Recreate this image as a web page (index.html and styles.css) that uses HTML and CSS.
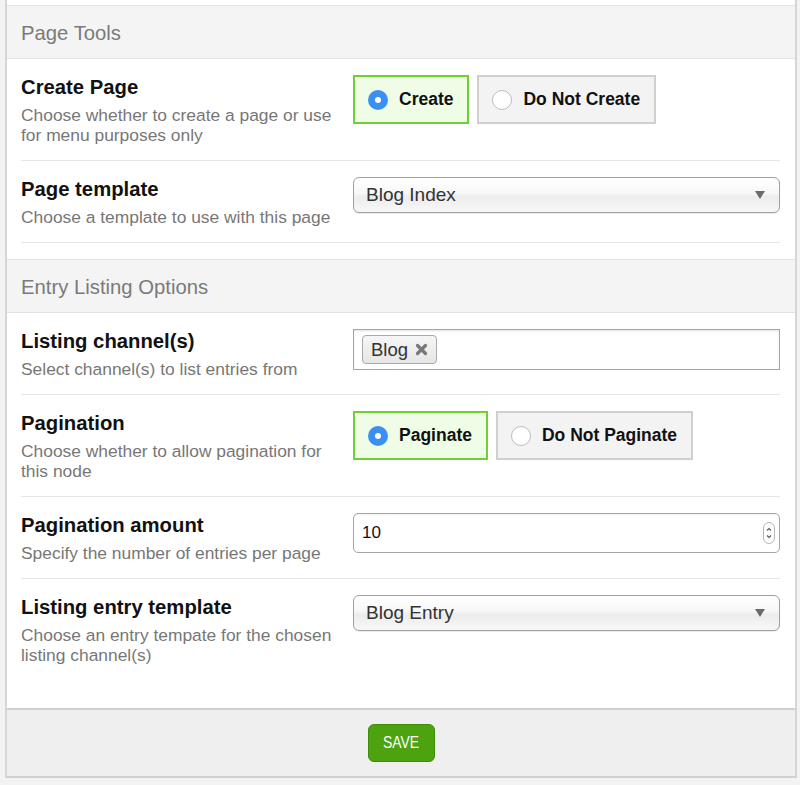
FILE: index.html
```html
<!DOCTYPE html>
<html>
<head>
<meta charset="utf-8">
<link rel="stylesheet" href="styles.css">
</head>
<body>
<div class="panel">
  <div class="topgap"></div>
  <section class="section">
    <div class="sec-head">Page Tools</div>
    <div class="row">
      <div class="info">
        <div class="label">Create Page</div>
        <div class="desc">Choose whether to create a page or use for menu purposes only</div>
      </div>
      <div class="ctrl">
        <div class="radios">
          <div class="radio on"><span class="dot"></span><span class="rtext">Create</span></div>
          <div class="radio"><span class="dot"></span><span class="rtext">Do Not Create</span></div>
        </div>
      </div>
    </div>
    <div class="row">
      <div class="info">
        <div class="label">Page template</div>
        <div class="desc">Choose a template to use with this page</div>
      </div>
      <div class="ctrl">
        <div class="select"><span>Blog Index</span><svg class="caret" width="10" height="8" viewBox="0 0 10 8"><path d="M0 0H10L5 8Z" fill="#6b6b6b"/></svg></div>
      </div>
    </div>
  </section>
  <section class="section last">
    <div class="sec-head">Entry Listing Options</div>
    <div class="row">
      <div class="info">
        <div class="label">Listing channel(s)</div>
        <div class="desc">Select channel(s) to list entries from</div>
      </div>
      <div class="ctrl">
        <div class="tags"><span class="tag">Blog<svg class="x" width="13" height="13" viewBox="0 0 13 13"><path d="M2.5 2.5L10.5 10.5M10.5 2.5L2.5 10.5" stroke="#777" stroke-width="3.2" stroke-linecap="round"/></svg></span></div>
      </div>
    </div>
    <div class="row">
      <div class="info">
        <div class="label">Pagination</div>
        <div class="desc">Choose whether to allow pagination for this node</div>
      </div>
      <div class="ctrl">
        <div class="radios">
          <div class="radio on"><span class="dot"></span><span class="rtext">Paginate</span></div>
          <div class="radio"><span class="dot"></span><span class="rtext">Do Not Paginate</span></div>
        </div>
      </div>
    </div>
    <div class="row">
      <div class="info">
        <div class="label">Pagination amount</div>
        <div class="desc">Specify the number of entries per page</div>
      </div>
      <div class="ctrl">
        <div class="number"><span>10</span><svg class="spin" width="12" height="22" viewBox="0 0 12 22"><rect x="0.5" y="0.5" width="11" height="21" rx="5.5" fill="#fff" stroke="#b5b5b5"/><path d="M4 8.5L6 6.5L8 8.5M4 13.5L6 15.5L8 13.5" fill="none" stroke="#555" stroke-width="1.1"/></svg></div>
      </div>
    </div>
    <div class="row noline">
      <div class="info">
        <div class="label">Listing entry template</div>
        <div class="desc">Choose an entry tempate for the chosen listing channel(s)</div>
      </div>
      <div class="ctrl">
        <div class="select"><span>Blog Entry</span><svg class="caret" width="10" height="8" viewBox="0 0 10 8"><path d="M0 0H10L5 8Z" fill="#6b6b6b"/></svg></div>
      </div>
    </div>
  </section>
  <div class="footer">
    <button class="save"><span class="save-text">SAVE</span></button>
  </div>
</div>
</body>
</html>
```
FILE: styles.css
```css
html, body {
  margin: 0;
  padding: 0;
  background: #f3f3f3;
}
body {
  padding: 0 3px 0 5px;
  font-family: "Liberation Sans", Arial, Helvetica, sans-serif;
  color: #111;
}
.panel {
  background: #fff;
  border-left: 2px solid #d6d6d6;
  border-right: 2px solid #d6d6d6;
  border-bottom: 2px solid #d0d0d0;
}
.topgap {
  height: 5px;
}
.section {
  padding-bottom: 16px;
}
.section.last {
  padding-bottom: 28px;
}
.sec-head {
  height: 52px;
  line-height: 54px;
  background: #f4f4f4;
  border-top: 1px solid #e2e2e2;
  border-bottom: 1px solid #e2e2e2;
  padding-left: 14px;
  font-size: 20.3px;
  color: #7a7a7a;
}
.row {
  display: grid;
  grid-template-columns: 332px 1fr;
  margin: 0 15px 0 14px;
  padding: 16px 0 15px;
  border-bottom: 1px solid #e6e6e6;
}
.row.noline {
  border-bottom: none;
}
.info {
  padding-right: 14px;
}
.label {
  font-size: 20.3px;
  font-weight: bold;
  line-height: 25px;
  color: #111;
}
.desc {
  margin-top: 5px;
  font-size: 17.4px;
  line-height: 20px;
  color: #777;
}
.radios {
  display: flex;
  gap: 8px;
}
.radio {
  display: flex;
  align-items: center;
  height: 45px;
  padding: 0 14px 0 13px;
  border: 2px solid #cfcfcf;
  background: #f3f3f3;
}
.radio.on {
  border-color: #6fd034;
  background: #effde6;
}
.dot {
  width: 20px;
  height: 20px;
  box-sizing: border-box;
  border-radius: 50%;
  border: 1px solid #bdbdbd;
  background: #fff;
  margin-right: 11px;
  position: relative;
}
.radio.on .dot {
  border: none;
  background: #3b8ff2;
}
.radio.on .dot::after {
  content: "";
  position: absolute;
  left: 7px;
  top: 7px;
  width: 6px;
  height: 6px;
  border-radius: 50%;
  background: #fff;
}
.rtext {
  font-size: 17.5px;
  font-weight: bold;
  color: #111;
}
.select {
  height: 34px;
  border: 1px solid #a0a0a0;
  border-radius: 6px;
  background: linear-gradient(#ffffff 0%, #f7f7f7 45%, #ececec 55%, #f8f8f8 100%);
  box-shadow: 0 1px 1px rgba(0,0,0,0.08);
  display: flex;
  align-items: center;
  justify-content: space-between;
  padding: 0 14px 0 12px;
  font-size: 19px;
  color: #333;
}
.tags {
  height: 39px;
  border: 1px solid #a6a6a6;
  box-shadow: inset 0 1px 2px rgba(0,0,0,0.12);
  display: flex;
  align-items: flex-start;
  padding: 0 8px;
}
.tag {
  margin-top: 5px;
  height: 27px;
  display: flex;
  align-items: center;
  gap: 7px;
  padding: 0 8px;
  border: 1px solid #aaaaaa;
  border-radius: 4px;
  background: linear-gradient(#f6f6f6, #e6e6e6);
  font-size: 18.5px;
  color: #333;
}
.number {
  height: 38px;
  border: 1px solid #a6a6a6;
  border-radius: 5px;
  box-shadow: inset 0 1px 1px rgba(0,0,0,0.06);
  display: flex;
  align-items: center;
  justify-content: space-between;
  padding: 0 4px 0 8px;
  font-size: 17px;
  color: #111;
}
.footer {
  border-top: 2px solid #d0d0d0;
  background: #efefef;
  height: 66px;
  display: flex;
  justify-content: center;
  align-items: center;
}
.save {
  width: 67px;
  height: 38px;
  border: 1px solid #3f8c0b;
  border-radius: 6px;
  background: #4ca20f;
  color: #fff;
  font-family: "Liberation Sans", Arial, sans-serif;
  font-size: 17px;
  padding: 0;
}
.save-text {
  display: inline-block;
  transform: scaleX(0.82);
}
```
